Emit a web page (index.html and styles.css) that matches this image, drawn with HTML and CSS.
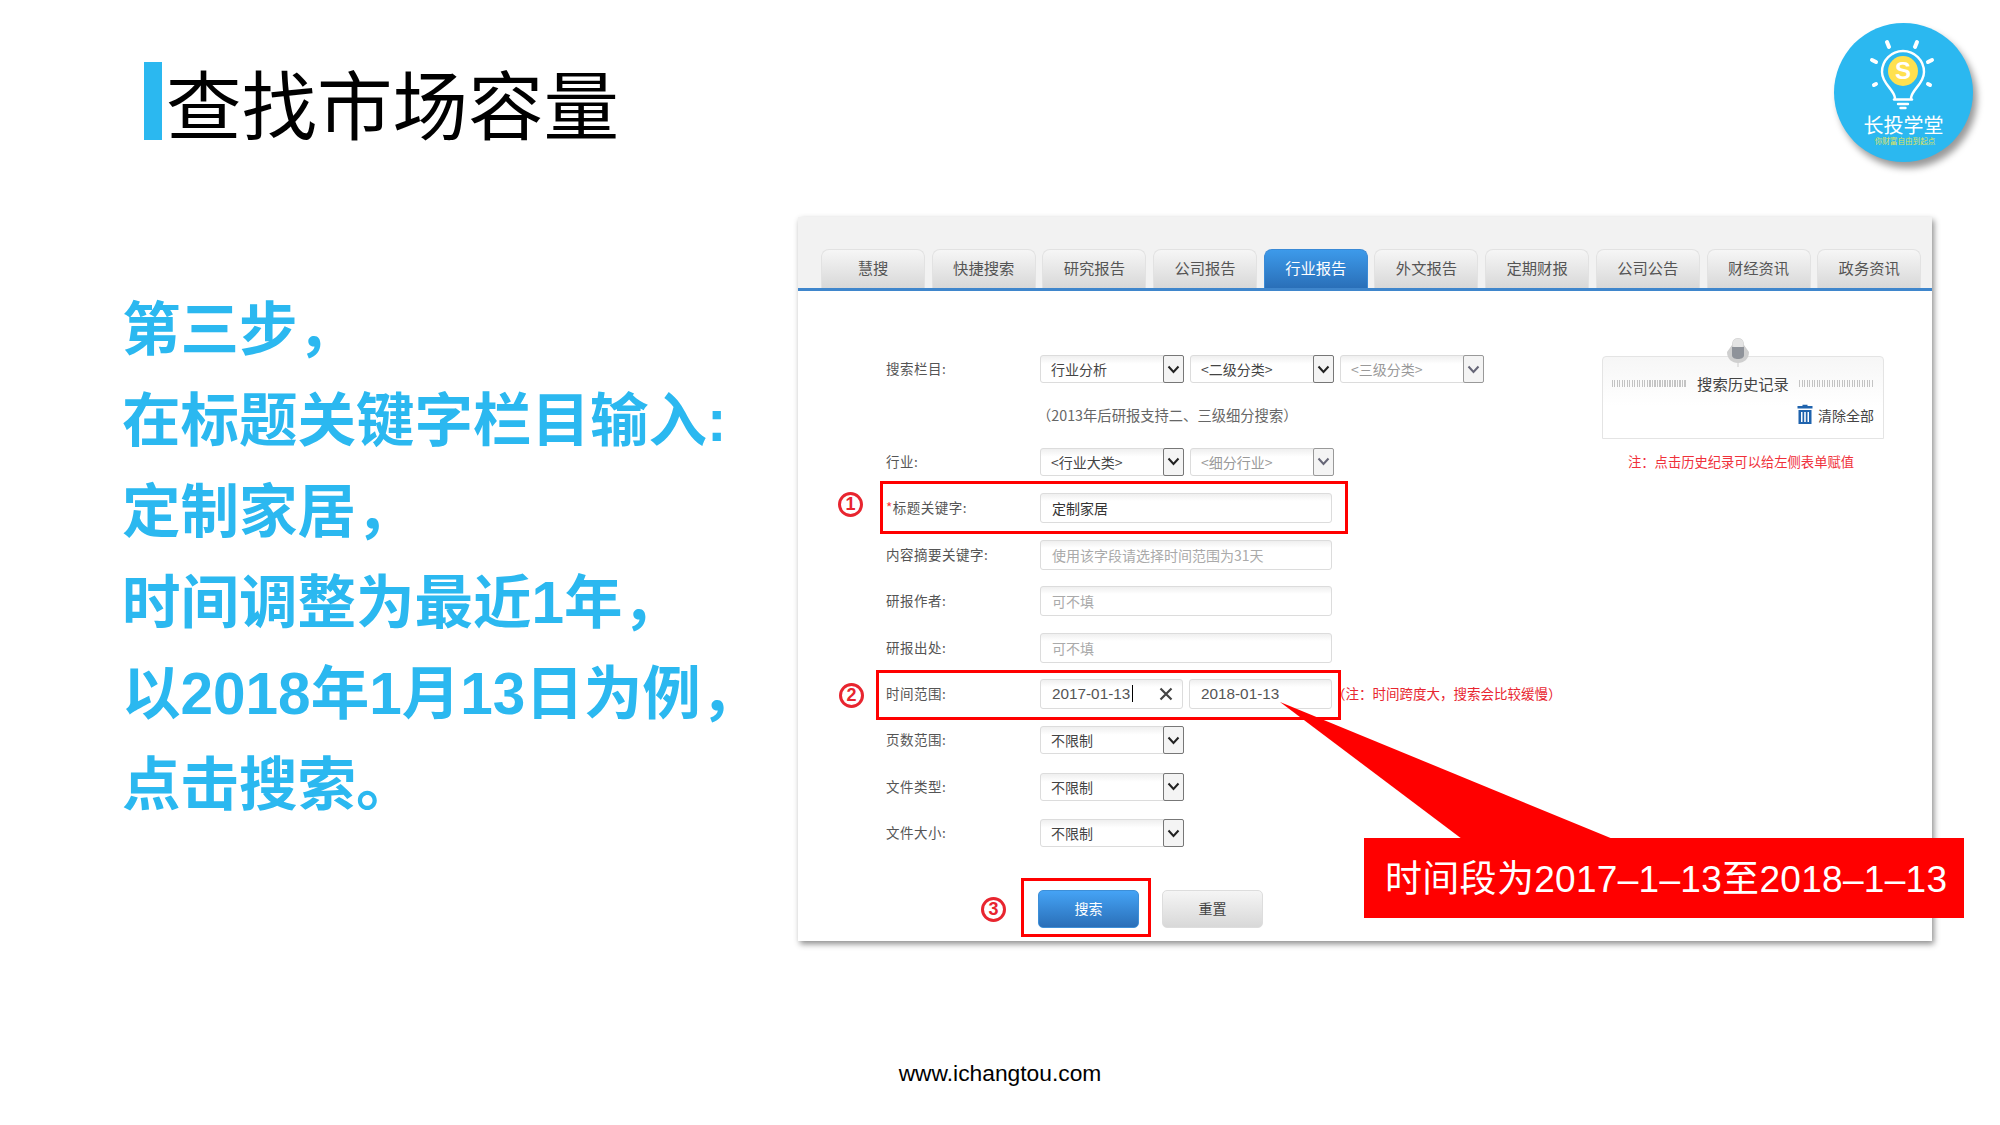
FILE: index.html
```html
<!DOCTYPE html>
<html lang="zh-CN">
<head>
  <meta charset="UTF-8">
  <title>查找市场容量</title>
  <link rel="stylesheet" href="styles.css">
</head>
<body>
  <div class="slide">
    <header class="slide-head">
      <span class="head-bar"></span>
      <h1>查找市场容量</h1>
    </header>

    <!-- logo -->
    <div class="logo">
      <svg width="139" height="139" viewBox="0 0 139 139">
        <g fill="none" stroke="#fff" stroke-width="2.4" stroke-linecap="round">
          <path d="M61 75 C60 66 48 61 48 49 A21 21 0 0 1 90 49 C90 61 78 66 77 75"/>
          <path d="M60 76.500 H78"/>
          <path d="M64 81 H74"/>
          <path d="M66.500 85 H71.500"/>
        </g>
        <circle cx="69" cy="48" r="15" fill="#ffe14f"/>
        <text class="logo-dollar" x="69" y="56" text-anchor="middle">S</text>
        <g fill="none" stroke="#fff" stroke-width="4" stroke-linecap="round">
          <path d="M53 19 L55 24"/>
          <path d="M83 19 L81 24"/>
          <path d="M38 37 L42 39"/>
          <path d="M98 37 L94 39"/>
          <path d="M40 62 L42 61"/>
          <path d="M96 62 L94 61"/>
        </g>
        <text class="logo-name" x="69.500" y="110" text-anchor="middle">长投学堂</text>
        <text class="logo-sub" x="71" y="121" text-anchor="middle">你财富自由到起点</text>
      </svg>
    </div>

    <main class="slide-main">
      <div class="steps">
        <p>第三步，</p>
        <p>在标题关键字栏目输入:</p>
        <p>定制家居，</p>
        <p>时间调整为最近1年，</p>
        <p>以2018年1月13日为例，</p>
        <p>点击搜索。</p>
      </div>

      <section class="panel">
        <nav class="tabs">
          <a class="tab">慧搜</a>
          <a class="tab">快捷搜索</a>
          <a class="tab">研究报告</a>
          <a class="tab">公司报告</a>
          <a class="tab active">行业报告</a>
          <a class="tab">外文报告</a>
          <a class="tab">定期财报</a>
          <a class="tab">公司公告</a>
          <a class="tab">财经资讯</a>
          <a class="tab">政务资讯</a>
        </nav>

        <div class="panel-body">
          <div class="form">
            <div class="row">
              <label>搜索栏目:</label>
              <div class="select"><span>行业分析</span><i class="arrow"><svg width="13" height="9" viewBox="0 0 13 9"><path d="M1.500 1.500 L6.500 7 L11.500 1.500" fill="none" stroke="#222" stroke-width="2"/></svg></i></div>
              <div class="select"><span>&lt;二级分类&gt;</span><i class="arrow"><svg width="13" height="9" viewBox="0 0 13 9"><path d="M1.500 1.500 L6.500 7 L11.500 1.500" fill="none" stroke="#222" stroke-width="2"/></svg></i></div>
              <div class="select off"><span>&lt;三级分类&gt;</span><i class="arrow"><svg width="13" height="9" viewBox="0 0 13 9"><path d="M1.500 1.500 L6.500 7 L11.500 1.500" fill="none" stroke="#667" stroke-width="2"/></svg></i></div>
            </div>
            <div class="row">
              <label></label>
              <span class="hint">（2013年后研报支持二、三级细分搜索）</span>
            </div>
            <div class="row">
              <label>行业:</label>
              <div class="select"><span>&lt;行业大类&gt;</span><i class="arrow"><svg width="13" height="9" viewBox="0 0 13 9"><path d="M1.500 1.500 L6.500 7 L11.500 1.500" fill="none" stroke="#222" stroke-width="2"/></svg></i></div>
              <div class="select off"><span>&lt;细分行业&gt;</span><i class="arrow"><svg width="13" height="9" viewBox="0 0 13 9"><path d="M1.500 1.500 L6.500 7 L11.500 1.500" fill="none" stroke="#667" stroke-width="2"/></svg></i></div>
            </div>
            <div class="row">
              <label><b>*</b>标题关键字:</label>
              <div class="input">定制家居</div>
            </div>
            <div class="row">
              <label>内容摘要关键字:</label>
              <div class="input empty">使用该字段请选择时间范围为31天</div>
            </div>
            <div class="row">
              <label>研报作者:</label>
              <div class="input empty">可不填</div>
            </div>
            <div class="row">
              <label>研报出处:</label>
              <div class="input empty">可不填</div>
            </div>
            <div class="row">
              <label>时间范围:</label>
              <div class="input date"><span class="caret">2017-01-13</span>
                <svg class="clear-x" width="14" height="14" viewBox="0 0 14 14"><path d="M1.500 1.500 L12.500 12.500 M12.500 1.500 L1.500 12.500" stroke="#444" stroke-width="2.200"/></svg>
              </div>
              <div class="input date">2018-01-13</div>
              <span class="warn">（注：时间跨度大，搜索会比较缓慢）</span>
            </div>
            <div class="row">
              <label>页数范围:</label>
              <div class="select"><span>不限制</span><i class="arrow"><svg width="13" height="9" viewBox="0 0 13 9"><path d="M1.500 1.500 L6.500 7 L11.500 1.500" fill="none" stroke="#222" stroke-width="2"/></svg></i></div>
            </div>
            <div class="row">
              <label>文件类型:</label>
              <div class="select"><span>不限制</span><i class="arrow"><svg width="13" height="9" viewBox="0 0 13 9"><path d="M1.500 1.500 L6.500 7 L11.500 1.500" fill="none" stroke="#222" stroke-width="2"/></svg></i></div>
            </div>
            <div class="row">
              <label>文件大小:</label>
              <div class="select"><span>不限制</span><i class="arrow"><svg width="13" height="9" viewBox="0 0 13 9"><path d="M1.500 1.500 L6.500 7 L11.500 1.500" fill="none" stroke="#222" stroke-width="2"/></svg></i></div>
            </div>
            <div class="buttons">
              <button class="btn primary">搜索</button>
              <button class="btn">重置</button>
            </div>
          </div>

          <aside class="history">
            <div class="history-box">
              <svg class="pin" width="24" height="30" viewBox="0 0 24 30">
                <path d="M12 1 C16 1 18 4 18 8 L23 15 C23 22 18 26 12 26 C6 26 1 22 1 15 L6 8 C6 4 8 1 12 1 Z" fill="#cfcfcf"/>
                <ellipse cx="12" cy="7" rx="5.500" ry="5.500" fill="#e4e4e4"/>
                <path d="M6 10 H18 V18 C18 21 15 22 12 22 C9 22 6 21 6 18 Z" fill="#8f939a"/>
                <path d="M12 26 V30" stroke="#ccc" stroke-width="1"/>
              </svg>
              <div class="history-title">
                <span class="dots"></span>
                <strong>搜索历史记录</strong>
                <span class="dots"></span>
              </div>
              <div class="history-clear">
                <svg width="16" height="21" viewBox="0 0 16 21">
                  <path d="M5.500 2 V0.800 H10.500 V2 H15.500 V4.500 H0.500 V2 Z" fill="#1f63ad"/>
                  <path d="M1.500 6 H14.500 V20 H1.500 Z M4 8 V18 H5.500 V8 Z M7.200 8 V18 H8.800 V8 Z M10.500 8 V18 H12 V8 Z" fill="#1f63ad" fill-rule="evenodd"/>
                </svg>
                <span>清除全部</span>
              </div>
            </div>
            <p class="history-note">注：点击历史纪录可以给左侧表单赋值</p>
          </aside>
        </div>
      </section>
    </main>

    <footer class="slide-foot">www.ichangtou.com</footer>

    <!-- red marks over the screenshot -->
    <div class="mark mark-1"></div>
    <div class="mark mark-2"></div>
    <div class="mark mark-3"></div>
    <span class="num num-1">1</span>
    <span class="num num-2">2</span>
    <span class="num num-3">3</span>
    <svg class="callout-tail" width="2000" height="1125" viewBox="0 0 2000 1125">
      <polygon points="1280,702 1613,839 1462,839" fill="#f00"/>
    </svg>
    <div class="callout">时间段为2017–1–13至2018–1–13</div>
  </div>
</body>
</html>
```

FILE: styles.css
```css
* {
  box-sizing: border-box;
}

body {
  margin: 0;
  background-color: white;
  font-family: "Noto Sans CJK SC", "Liberation Sans", sans-serif;
}

.slide {
  position: relative;
  width: 2000px;
  height: 1125px;
  overflow: hidden;
  background-color: white;
}

/* title */
.slide-head {
  display: flex;
  align-items: center;
  gap: 4px;
  height: 78px;
  padding-left: 144px;
  position: absolute;
  left: 0;
  top: 62px;
}

.head-bar {
  width: 18px;
  height: 78px;
  background-color: #2bb8f0;
}

.slide-head h1 {
  margin: 0;
  font-size: 75.500px;
  font-weight: 400;
  line-height: 78px;
  color: black;
}

/* logo */
.logo {
  position: absolute;
  left: 1834px;
  top: 23px;
  width: 139px;
  height: 139px;
  border-radius: 50%;
  background-color: #2bb8f0;
  box-shadow: 4px 6px 7px rgba(0, 0, 0, 0.4);
}

.logo svg {
  display: block;
}

.logo-dollar {
  font-family: "Liberation Sans", sans-serif;
  font-size: 24px;
  font-weight: 700;
  fill: white;
}

.logo-name {
  font-size: 20px;
  fill: white;
}

.logo-sub {
  font-size: 7.6px;
  fill: #dfe35c;
}

/* left text + panel */
.slide-main {
  display: flex;
  align-items: flex-start;
  position: absolute;
  left: 0;
  top: 217px;
}

.steps {
  width: 798px;
  padding: 67px 0 0 122px;
}

.steps p {
  margin: 0;
  font-family: "Liberation Sans", "Noto Sans CJK SC", sans-serif;
  font-size: 58.500px;
  font-weight: 700;
  line-height: 91px;
  color: #2bb8f0;
  white-space: nowrap;
}

.panel {
  width: 1134px;
  height: 724px;
  background-color: white;
  box-shadow: 2px 3px 6px rgba(0, 0, 0, 0.45);
}

.tabs {
  display: flex;
  align-items: flex-end;
  gap: 6.700px;
  height: 74px;
  padding-left: 23px;
  background-color: #f2f2f2;
  border-bottom: 3px solid #3f86cc;
}

.tab {
  width: 104px;
  height: 39px;
  border: 1px solid #e2e2e2;
  border-bottom: none;
  border-radius: 8px 8px 0 0;
  background: linear-gradient(#f6f6f6, #d8d8d8);
  font-size: 15.300px;
  line-height: 35px;
  text-align: center;
  color: #555;
}

.tab.active {
  border-color: #3a8ad6;
  background: linear-gradient(#3d9aea, #2a6fb8);
  color: white;
}

.panel-body {
  display: flex;
  align-items: flex-start;
  padding-top: 55px;
}

.form {
  width: 804px;
  padding-left: 88px;
}

.row {
  display: flex;
  align-items: center;
  height: 46.400px;
  white-space: nowrap;
}

.row label {
  width: 154px;
  flex: none;
  margin-top: -2px;
  font-size: 13.500px;
  letter-spacing: 0.5px;
  color: #555;
}

.row label b {
  font-weight: 400;
  color: #f33;
}

.select {
  display: flex;
  justify-content: space-between;
  width: 144px;
  height: 28px;
  margin-right: 6px;
  border: 1px solid #dcdcdc;
  border-radius: 3px;
  background: linear-gradient(#efefef, white 30%);
  font-size: 14px;
  line-height: 26px;
  color: #444;
}

.select span {
  padding-left: 10px;
}

.select.off {
  color: #999;
}

.arrow {
  display: flex;
  align-items: center;
  justify-content: center;
  width: 21px;
  margin: -1px;
  border: 1px solid #777;
  border-radius: 2px;
  background-color: #f4f4f4;
}

.select.off .arrow {
  border-color: #999;
}

.hint {
  margin-left: -3px;
  margin-top: -2px;
  font-size: 14.300px;
  color: #666;
}

.input {
  width: 292px;
  height: 30px;
  padding-left: 11px;
  border: 1px solid #dcdcdc;
  border-radius: 3px;
  background: linear-gradient(#efefef, white 25%);
  font-size: 14px;
  line-height: 28px;
  color: #333;
}

.input.empty {
  color: #aaa;
}

.input.date {
  display: flex;
  align-items: center;
  width: 143px;
  margin-right: 6px;
  font-family: "Liberation Sans", sans-serif;
  font-size: 15.300px;
  color: #555;
}

.caret {
  padding-right: 2px;
  border-right: 1px solid black;
  line-height: 17px;
}

.clear-x {
  margin-left: 26px;
}

.warn {
  margin-left: -6px;
  margin-top: -1px;
  font-size: 13.500px;
  color: #e8252f;
}

.buttons {
  display: flex;
  gap: 23px;
  margin-top: 34px;
  padding-left: 152px;
}

.btn {
  width: 101px;
  height: 38px;
  border: 1px solid #ddd;
  border-radius: 5px;
  background: linear-gradient(#f5f5f5, #d8d8d8);
  font-family: inherit;
  font-size: 14px;
  line-height: 34px;
  padding: 0 0 2px;
  color: #444;
}

.btn.primary {
  border-color: #3d8fd8;
  background: linear-gradient(#45a3f5, #2a6fb8);
  color: white;
}

/* search history */
.history {
  width: 282px;
  margin-top: 10px;
}

.history-box {
  position: relative;
  height: 83px;
  padding: 14px 9px 0;
  border: 1px solid #e4e4e4;
  border-radius: 4px 4px 0 0;
  background: linear-gradient(#f6f6f6, white 60%);
}

.pin {
  position: absolute;
  left: 123px;
  top: -20px;
}

.history-title {
  display: flex;
  align-items: center;
  justify-content: space-between;
  height: 24px;
}

.history-title strong {
  font-size: 15.300px;
  font-weight: 400;
  color: #444;
}

.dots {
  width: 75px;
  height: 7px;
  background: repeating-linear-gradient(90deg, #c4c4c4 0 1px, transparent 1px 2.500px);
}

.history-clear {
  display: flex;
  justify-content: flex-end;
  align-items: center;
  gap: 5px;
  margin-top: 9px;
  font-size: 14px;
  color: #444;
}

.history-note {
  margin: 13px 0 0;
  padding-left: 26px;
  font-size: 13.300px;
  color: #f0303a;
}

/* footer */
.slide-foot {
  position: absolute;
  left: 0;
  right: 0;
  top: 1058px;
  font-family: "Liberation Sans", sans-serif;
  font-size: 22.800px;
  line-height: 30px;
  text-align: center;
  color: black;
}

/* red annotations */
.mark {
  position: absolute;
  border: 3px solid #f00;
}

.mark-1 {
  left: 880px;
  top: 481px;
  width: 468px;
  height: 53px;
}

.mark-2 {
  left: 876px;
  top: 670px;
  width: 465px;
  height: 50px;
}

.mark-3 {
  left: 1021px;
  top: 878px;
  width: 130px;
  height: 59px;
}

.num {
  position: absolute;
  width: 25px;
  height: 25px;
  border: 3px solid #e8252f;
  border-radius: 50%;
  font-family: "Liberation Sans", sans-serif;
  font-size: 18px;
  font-weight: 700;
  line-height: 19px;
  text-align: center;
  color: #e8252f;
}

.num-1 {
  left: 838px;
  top: 492px;
}

.num-2 {
  left: 839px;
  top: 683px;
}

.num-3 {
  left: 981px;
  top: 897px;
}

.callout-tail {
  position: absolute;
  left: 0;
  top: 0;
}

.callout {
  position: absolute;
  left: 1364px;
  top: 838px;
  width: 600px;
  height: 80px;
  padding-left: 21px;
  background-color: #f00;
  font-family: "Liberation Sans", "Noto Sans CJK SC", sans-serif;
  font-size: 37px;
  letter-spacing: 0.3px;
  line-height: 84px;
  color: white;
  white-space: nowrap;
}
```
